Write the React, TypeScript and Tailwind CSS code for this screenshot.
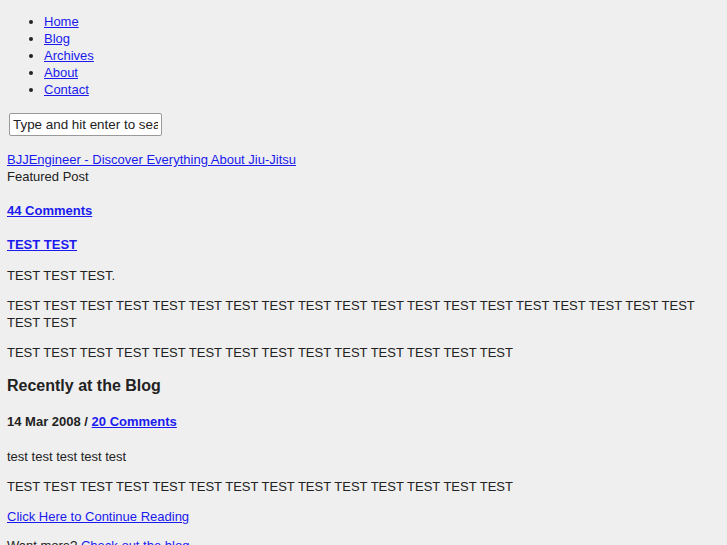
const nav = ["Home", "Blog", "Archives", "About", "Contact"];

const T = (n: number) => Array.from({ length: n }, () => "TEST").join(" ");

export default function App() {
  return (
    <div className="min-h-[545px] bg-[#efefef] px-[7px] text-[13px] leading-[17px] text-[#222] [font-family:'Liberation_Sans',Arial,sans-serif]">
      <ul className="list-disc pt-[13px] pl-[37px]">
        {nav.map((n) => (
          <li key={n}>
            <a href="#" className="text-[#1a1aee] underline">
              {n}
            </a>
          </li>
        ))}
      </ul>
      <div className="mt-[15px] pl-[2px]">
        <input
          readOnly
          value="Type and hit enter to search"
          className="h-[23px] w-[153px] rounded-[2px] border border-[#999] bg-white px-[3px] text-[13.4px] text-[#222]"
        />
      </div>
      <div className="mt-[15px]">
        <a href="#" className="text-[#1a1aee] underline">
          BJJEngineer - Discover Everything About Jiu-Jitsu
        </a>
      </div>
      <div>Featured Post</div>
      <p className="mt-[17px] font-bold">
        <a href="#" className="text-[#1a1aee] underline">44 Comments</a>
      </p>
      <p className="mt-[17px] font-bold">
        <a href="#" className="text-[#1a1aee] underline">TEST TEST</a>
      </p>
      <p className="mt-[14px]">TEST TEST TEST.</p>
      <p className="mt-[13px]">{T(21)}</p>
      <p className="mt-[13px]">{T(14)}</p>
      <h3 className="mt-[15px] text-[16px] leading-[20px] font-bold">Recently at the Blog</h3>
      <p className="mt-[17px] font-bold">
        14 Mar 2008 /{" "}
        <a href="#" className="text-[#1a1aee] underline">20 Comments</a>
      </p>
      <p className="mt-[18px]">test test test test test</p>
      <p className="mt-[13px]">{T(14)}</p>
      <p className="mt-[13px]">
        <a href="#" className="text-[#1a1aee] underline">Click Here to Continue Reading</a>
      </p>
      <p className="mt-[12px]">
        Want more?{" "}
        <a href="#" className="text-[#1a1aee] underline">Check out the blog</a>
      </p>
    </div>
  );
}
